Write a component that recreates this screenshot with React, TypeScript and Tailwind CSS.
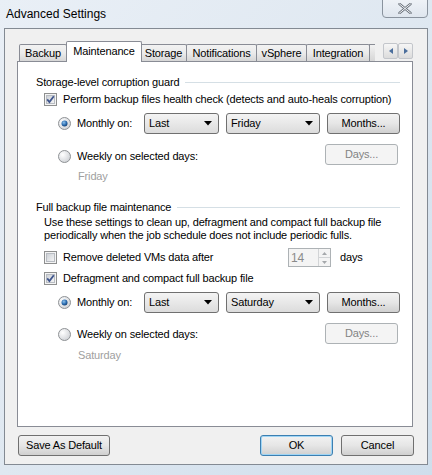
import React from 'react';

const TABS = [
  { label: 'Backup', w: 48 },
  { label: 'Maintenance', w: 76, active: true },
  { label: 'Storage', w: 47 },
  { label: 'Notifications', w: 71 },
  { label: 'vSphere', w: 51 },
  { label: 'Integration', w: 64 },
];

function CheckBox({ checked }: { checked?: boolean }) {
  return (
    <svg width="13" height="13" viewBox="0 0 13 13" className="shrink-0">
      <defs>
        <linearGradient id="cbg" x1="0" y1="0" x2="1" y2="1">
          <stop offset="0" stopColor="#cbcfd5" />
          <stop offset="1" stopColor="#f6f6f6" />
        </linearGradient>
      </defs>
      <rect x="0.5" y="0.5" width="12" height="12" fill="#f4f4f4" stroke="#8e8f8f" />
      <rect x="2.5" y="2.5" width="8" height="8" fill="url(#cbg)" stroke="#b8bcc2" />
      {checked && (
        <path d="M3.2 6.4 L5.4 9 L9.8 3.2" fill="none" stroke="#40568d" strokeWidth="1.8" />
      )}
    </svg>
  );
}

function Radio({ checked }: { checked?: boolean }) {
  return (
    <svg width="13" height="13" viewBox="0 0 13 13" className="shrink-0">
      <defs>
        <radialGradient id="rbg" cx="0.35" cy="0.35" r="0.8">
          <stop offset="0" stopColor="#ffffff" />
          <stop offset="1" stopColor="#c9ccd1" />
        </radialGradient>
        <radialGradient id="rdot" cx="0.4" cy="0.35" r="0.7">
          <stop offset="0" stopColor="#8fc3ec" />
          <stop offset="0.6" stopColor="#2a6bb0" />
          <stop offset="1" stopColor="#123a69" />
        </radialGradient>
      </defs>
      <circle cx="6.5" cy="6.5" r="6" fill="url(#rbg)" stroke="#8f9295" />
      {checked && <circle cx="6.5" cy="6.5" r="3" fill="url(#rdot)" />}
    </svg>
  );
}

function Combo({ value, w }: { value: string; w: string }) {
  return (
    <div
      className={`${w} h-[21px] flex items-center justify-between pl-[4px] pr-[6px] border border-[#707070] rounded-[3px] bg-gradient-to-b from-[#f4f4f4] to-[#dcdcdc]`}
    >
      <span>{value}</span>
      <svg width="8" height="5" viewBox="0 0 8 5">
        <path d="M0 0 H8 L4 4.5 Z" fill="#000" />
      </svg>
    </div>
  );
}

function Btn({ label, disabled, w, primary }: { label: string; disabled?: boolean; w: string; primary?: boolean }) {
  if (disabled) {
    return (
      <div className={`${w} h-[21px] flex items-center justify-center border border-[#adb2b5] rounded-[3px] bg-[#f4f4f4] text-[#838383]`}>
        {label}
      </div>
    );
  }
  return (
    <div
      className={`${w} h-[21px] flex items-center justify-center rounded-[3px] border ${
        primary ? 'border-[#3c7fb1] shadow-[inset_0_0_0_1px_#9fd5f5]' : 'border-[#707070]'
      } bg-gradient-to-b from-[#f2f2f2] via-[#e6e6e6] to-[#d0d0d0]`}
    >
      {label}
    </div>
  );
}

export default function App() {
  return (
    <div className="w-[432px] h-[475px] relative overflow-hidden bg-gradient-to-br from-[#e9eff6] via-[#dfe8f1] to-[#cfdeec] font-['Liberation_Sans',Arial,sans-serif] text-[11px] tracking-[-0.15px] text-black leading-none whitespace-nowrap">
      {/* title bar */}
      <div className="h-[28px] flex items-center pl-[6px] text-[12px] tracking-normal">Advanced Settings</div>
      <div className="absolute left-[382px] top-[-4px] w-[46px] h-[22px] rounded-b-[4px] border border-[#8a939e] bg-gradient-to-b from-[#f1f4f8] to-[#dfe6ee] flex items-end justify-center pb-[3px]">
        <svg width="14" height="11" viewBox="0 0 14 11">
          <path d="M1.5 1 L12.5 10 M12.5 1 L1.5 10" stroke="#6b727b" strokeWidth="2.4" strokeLinecap="round" />
          <path d="M1.5 1 L12.5 10 M12.5 1 L1.5 10" stroke="#f5f7fa" strokeWidth="1" strokeLinecap="round" />
        </svg>
      </div>

      {/* client area */}
      <div className="ml-[4px] w-[424px] h-[437px] border border-[#838a93] bg-[#f0f0f0]">
        {/* tab strip */}
        <div className="relative mt-[12px] ml-[14px] h-[20px] flex items-end">
          {TABS.map((t) =>
            t.active ? (
              <div
                key={t.label}
                style={{ width: t.w }}
                className="relative z-10 -ml-[1px] -mr-[1px] h-[21px] -mb-[1px] bg-white border border-b-0 border-[#898c95] rounded-t-[2px] flex justify-center pt-[4px]"
              >
                {t.label}
              </div>
            ) : (
              <div
                key={t.label}
                style={{ width: t.w }}
                className="h-[17px] -ml-[1px] first:ml-0 bg-gradient-to-b from-[#f2f2f2] via-[#ebebeb] to-[#d6d6d6] border border-b-0 border-[#898c95] rounded-t-[2px] flex justify-center pt-[3px]"
              >
                {t.label}
              </div>
            )
          )}
          <div className="h-[17px] w-[6px] -ml-[1px] border border-b-0 border-r-0 border-[#898c95] bg-gradient-to-b from-[#f2f2f2] to-[#d6d6d6]" />
          <div className="absolute left-[364px] top-[2px] flex">
            {['M5 1 L1 4 L5 7 Z', 'M1 1 L5 4 L1 7 Z'].map((d, i) => (
              <div
                key={i}
                className="w-[15px] h-[16px] border border-[#c3c6cb] rounded-[2px] bg-gradient-to-b from-[#f6f6f6] to-[#dcdcdc] flex items-center justify-center"
              >
                <svg width="6" height="8" viewBox="0 0 6 8">
                  <path d={d} fill="#4b6e9c" />
                </svg>
              </div>
            ))}
          </div>
        </div>

        {/* tab panel */}
        <div className="ml-[12px] w-[396px] h-[366px] border border-[#898c95] bg-white flex flex-col">
          <div className="mt-[13px] h-[14px] flex items-center pl-[18px] pr-[12px] gap-[6px]">
            <span>Storage-level corruption guard</span>
            <div className="flex-1 h-px bg-[#d5dfe5]" />
          </div>
          <div className="mt-[3px] h-[14px] flex items-center pl-[26px] gap-[6px]">
            <CheckBox checked />
            <span>Perform backup files health check (detects and auto-heals corruption)</span>
          </div>
          <div className="mt-[7px] h-[21px] flex items-center pl-[40px]">
            <div className="w-[86px] flex items-center gap-[6px]">
              <Radio checked />
              <span>Monthly on:</span>
            </div>
            <Combo value="Last" w="w-[75px]" />
            <div className="w-[7px]" />
            <Combo value="Friday" w="w-[94px]" />
            <div className="w-[7px]" />
            <Btn label="Months..." w="w-[73px]" />
          </div>
          <div className="mt-[10px] h-[21px] flex items-center pl-[40px] w-[380px]">
            <div className="flex items-center gap-[6px] mt-[3px]">
              <Radio />
              <span>Weekly on selected days:</span>
            </div>
            <div className="ml-auto">
              <Btn label="Days..." w="w-[73px]" disabled />
            </div>
          </div>
          <div className="mt-[4px] h-[14px] flex items-center pl-[60px] text-[#a0a0a0]">Friday</div>

          <div className="mt-[17px] h-[14px] flex items-center pl-[18px] pr-[12px] gap-[6px]">
            <span>Full backup file maintenance</span>
            <div className="flex-1 h-px bg-[#d5dfe5]" />
          </div>
          <div className="mt-[2px] pl-[26px] leading-[13px]">
            <div>Use these settings to clean up, defragment and compact full backup file</div>
            <div>periodically when the job schedule does not include periodic fulls.</div>
          </div>
          <div className="mt-[6px] h-[19px] flex items-center pl-[26px]">
            <div className="w-[244px] flex items-center gap-[6px]">
              <CheckBox />
              <span>Remove deleted VMs data after</span>
            </div>
            <div className="w-[43px] h-[19px] border border-[#adb2b5] bg-[#f4f4f4] flex items-center text-[#8a8a8a] text-[12px]">
              <span className="flex-1 pl-[2px]">14</span>
              <div className="w-[12px] h-full flex flex-col border-l border-[#d2d4d6]">
                <div className="flex-1 flex items-center justify-center border-b border-[#d2d4d6]">
                  <svg width="5" height="3" viewBox="0 0 5 3"><path d="M0 3 L2.5 0 L5 3 Z" fill="#a5a8ab" /></svg>
                </div>
                <div className="flex-1 flex items-center justify-center">
                  <svg width="5" height="3" viewBox="0 0 5 3"><path d="M0 0 L2.5 3 L5 0 Z" fill="#a5a8ab" /></svg>
                </div>
              </div>
            </div>
            <span className="ml-[9px]">days</span>
          </div>
          <div className="mt-[4px] h-[14px] flex items-center pl-[26px] gap-[6px]">
            <CheckBox checked />
            <span>Defragment and compact full backup file</span>
          </div>
          <div className="mt-[7px] h-[21px] flex items-center pl-[40px]">
            <div className="w-[86px] flex items-center gap-[6px]">
              <Radio checked />
              <span>Monthly on:</span>
            </div>
            <Combo value="Last" w="w-[75px]" />
            <div className="w-[7px]" />
            <Combo value="Saturday" w="w-[94px]" />
            <div className="w-[7px]" />
            <Btn label="Months..." w="w-[73px]" />
          </div>
          <div className="mt-[10px] h-[21px] flex items-center pl-[40px] w-[380px]">
            <div className="flex items-center gap-[6px] mt-[2px]">
              <Radio />
              <span>Weekly on selected days:</span>
            </div>
            <div className="ml-auto">
              <Btn label="Days..." w="w-[73px]" disabled />
            </div>
          </div>
          <div className="mt-[4px] h-[14px] flex items-center pl-[60px] text-[#a0a0a0]">Saturday</div>
        </div>

        {/* bottom buttons */}
        <div className="mt-[8px] flex items-center pl-[13px]">
          <Btn label="Save As Default" w="w-[92px]" />
          <div className="ml-[150px]">
            <Btn label="OK" w="w-[73px]" primary />
          </div>
          <div className="ml-[8px]">
            <Btn label="Cancel" w="w-[73px]" />
          </div>
        </div>
      </div>
    </div>
  );
}
